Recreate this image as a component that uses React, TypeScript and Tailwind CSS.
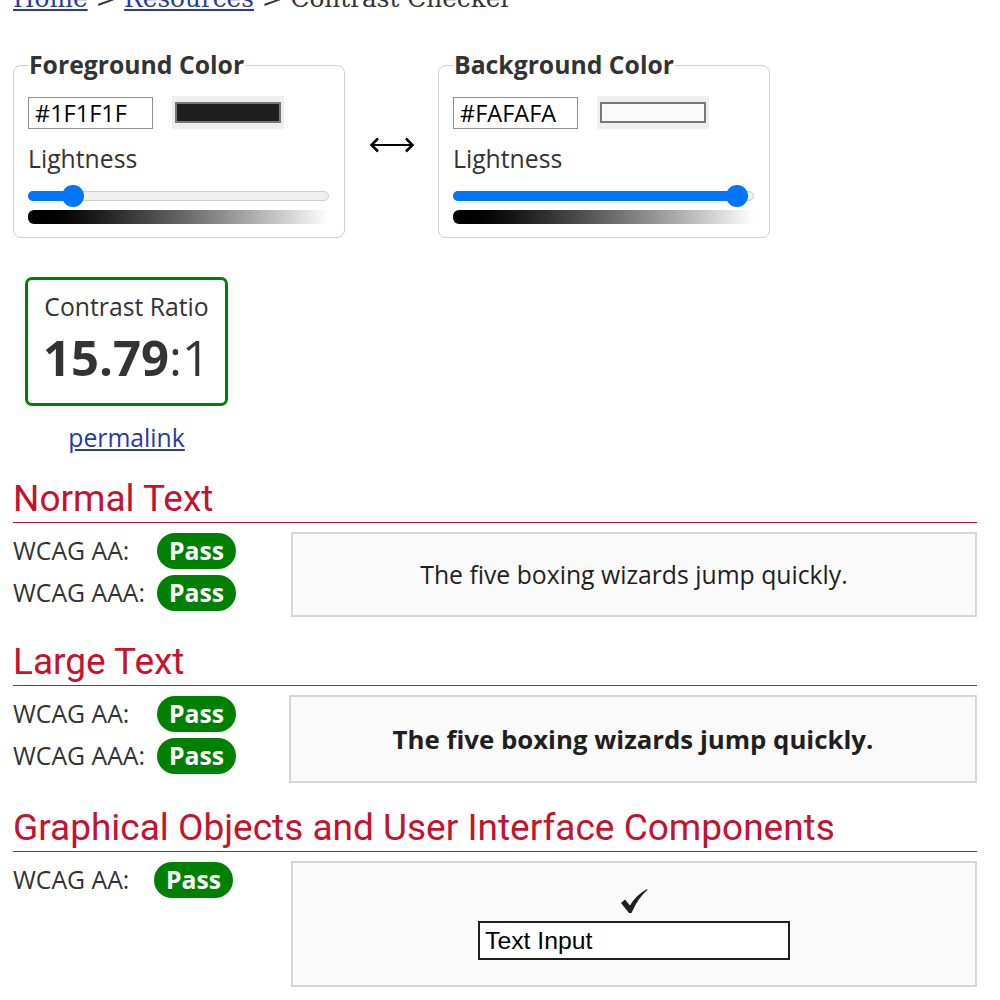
import React from 'react';

function ColorField({ legend, hex, swatch, pct }: { legend: string; hex: string; swatch: string; pct: number }) {
  return (
    <fieldset className="w-[332px] rounded-[8px] border border-[#cfcfcf] pl-[14px] pr-[15px] pt-[14px] pb-[13px]">
      <legend className="px-[1px] text-[24.75px] leading-[34px] font-bold text-[#333]">{legend}</legend>
      <div className="flex items-center gap-[19px]">
        <div className="w-[125px] h-[32px] border border-[#8f8f8f] pl-[6px] text-[23.5px] leading-[30px] text-black">{hex}</div>
        <div className="w-[112px] h-[33px] bg-[#efefef] px-[3px] py-[6px]">
          <div className="w-full h-full border-2 border-[#777]" style={{ background: swatch }} />
        </div>
      </div>
      <div className="mt-[13px] text-[24.75px] leading-[34px] text-[#333]">Lightness</div>
      {/* slider */}
      <div className="relative mt-[9px] h-[22px]">
        <div className="absolute left-0 right-0 top-[6px] h-[10px] rounded-full bg-[#efefef] border border-[#cfcfcf]" />
        <div className="absolute left-0 top-[6px] h-[10px] rounded-full bg-[#0075ff]" style={{ width: `calc(11px + (100% - 22px) * ${pct})` }} />
        <div className="absolute top-0 w-[22px] h-[22px] rounded-full bg-[#0075ff]" style={{ left: `calc((100% - 22px) * ${pct})` }} />
      </div>
      <div className="mt-[3px] h-[14px] rounded-l-[6px] bg-gradient-to-r from-black to-white" />
    </fieldset>
  );
}

function Pass() {
  return (
    <span className="inline-flex w-[79px] h-[36px] items-center justify-center rounded-full bg-[#008000] text-white font-bold text-[24.75px]">Pass</span>
  );
}

function Heading({ children }: { children: React.ReactNode }) {
  return (
    <h2 className="font-['Roboto'] text-[37px] leading-[42px] text-[#c4122f] border-b border-[#c4122f] pb-[2px]">{children}</h2>
  );
}

export default function App() {
  return (
    <div className="min-h-screen bg-white font-['Open_Sans',sans-serif] text-[#333]">
      <div className="ml-[13px] w-[964px]">
        {/* Breadcrumb */}
        <div className="-mt-[18px] font-['DejaVu_Serif',serif] text-[24.75px] leading-[34px] text-[#333]">
          <a href="#" className="text-[#2b3a9c] underline">Home</a> &gt;{' '}
          <a href="#" className="text-[#2b3a9c] underline">Resources</a> &gt; Contrast Checker
        </div>

        {/* Color pickers */}
        <div className="mt-[32px] flex items-center">
          <ColorField legend="Foreground Color" hex="#1F1F1F" swatch="#1f1f1f" pct={0.122} />
          <div className="w-[93px] flex justify-center mt-[4px]">
            <svg width="46" height="16" viewBox="0 0 46 16" fill="none" stroke="black" strokeWidth="2">
              <path d="M2 8 H44" />
              <path d="M9 1.5 L2.5 8 L9 14.5" strokeWidth="2.5" />
              <path d="M37 1.5 L43.5 8 L37 14.5" strokeWidth="2.5" />
            </svg>
          </div>
          <ColorField legend="Background Color" hex="#FAFAFA" swatch="#fafafa" pct={0.98} />
        </div>

        {/* Ratio */}
        <div className="ml-[12px] mt-[39px] w-[203px] flex flex-col items-center">
          <div className="w-full h-[129px] rounded-[7px] border-[3px] border-[#008000] flex flex-col items-center pt-[10px]">
            <div className="text-[24.75px] leading-[34px]">Contrast Ratio</div>
            <div className="text-[49px] leading-[60px] mt-[3px]"><span className="font-bold">15.79</span>:1</div>
          </div>
          <a href="#" className="mt-[15px] text-[24.75px] leading-[34px] text-[#2b3a9c] underline">permalink</a>
        </div>

        {/* Normal text */}
        <div className="mt-[23px]">
          <Heading>Normal Text</Heading>
          <div className="mt-[9px] flex">
            <div className="w-[278px] flex flex-col gap-[5px] text-[24.75px]">
              <div className="flex items-center"><span className="w-[144px]">WCAG AA:</span><Pass /></div>
              <div className="flex items-center"><span className="w-[144px]">WCAG AAA:</span><Pass /></div>
            </div>
            <div className="flex-1 h-[85px] border-2 border-[#d6d6d6] bg-[#fafafa] flex items-center justify-center text-[24.75px] text-[#1f1f1f]">
              The five boxing wizards jump quickly.
            </div>
          </div>
        </div>

        {/* Large text */}
        <div className="mt-[24px]">
          <Heading>Large Text</Heading>
          <div className="mt-[9px] flex">
            <div className="w-[276px] flex flex-col gap-[5px] text-[24.75px]">
              <div className="flex items-center"><span className="w-[144px]">WCAG AA:</span><Pass /></div>
              <div className="flex items-center"><span className="w-[144px]">WCAG AAA:</span><Pass /></div>
            </div>
            <div className="flex-1 h-[88px] border-2 border-[#d6d6d6] bg-[#fafafa] flex items-center justify-center text-[25.8px] font-bold text-[#1f1f1f]">
              The five boxing wizards jump quickly.
            </div>
          </div>
        </div>

        {/* Graphical */}
        <div className="mt-[24px]">
          <Heading>Graphical Objects and User Interface Components</Heading>
          <div className="mt-[9px] flex">
            <div className="w-[278px] text-[24.75px]">
              <div className="flex items-center"><span className="w-[141px]">WCAG AA:</span><Pass /></div>
            </div>
            <div className="flex-1 h-[126px] border-2 border-[#d6d6d6] bg-[#fafafa] flex flex-col items-center pt-[25px]">
              <svg width="28" height="26" viewBox="0 0 28 26" className="text-[#1f1f1f]">
                <path d="M1 15 L5 11.5 L10 17.5 Q16 7 27 1 L27.5 1.8 Q18 10 11.5 25 L9 25 Z" fill="currentColor" />
              </svg>
              <div className="mt-[7px] w-[312px] h-[39px] border-2 border-[#1f1f1f] bg-white pl-[5px] font-['Liberation_Sans',sans-serif] text-[24.75px] leading-[35px] text-black">
                Text Input
              </div>
            </div>
          </div>
        </div>
      </div>
    </div>
  );
}
